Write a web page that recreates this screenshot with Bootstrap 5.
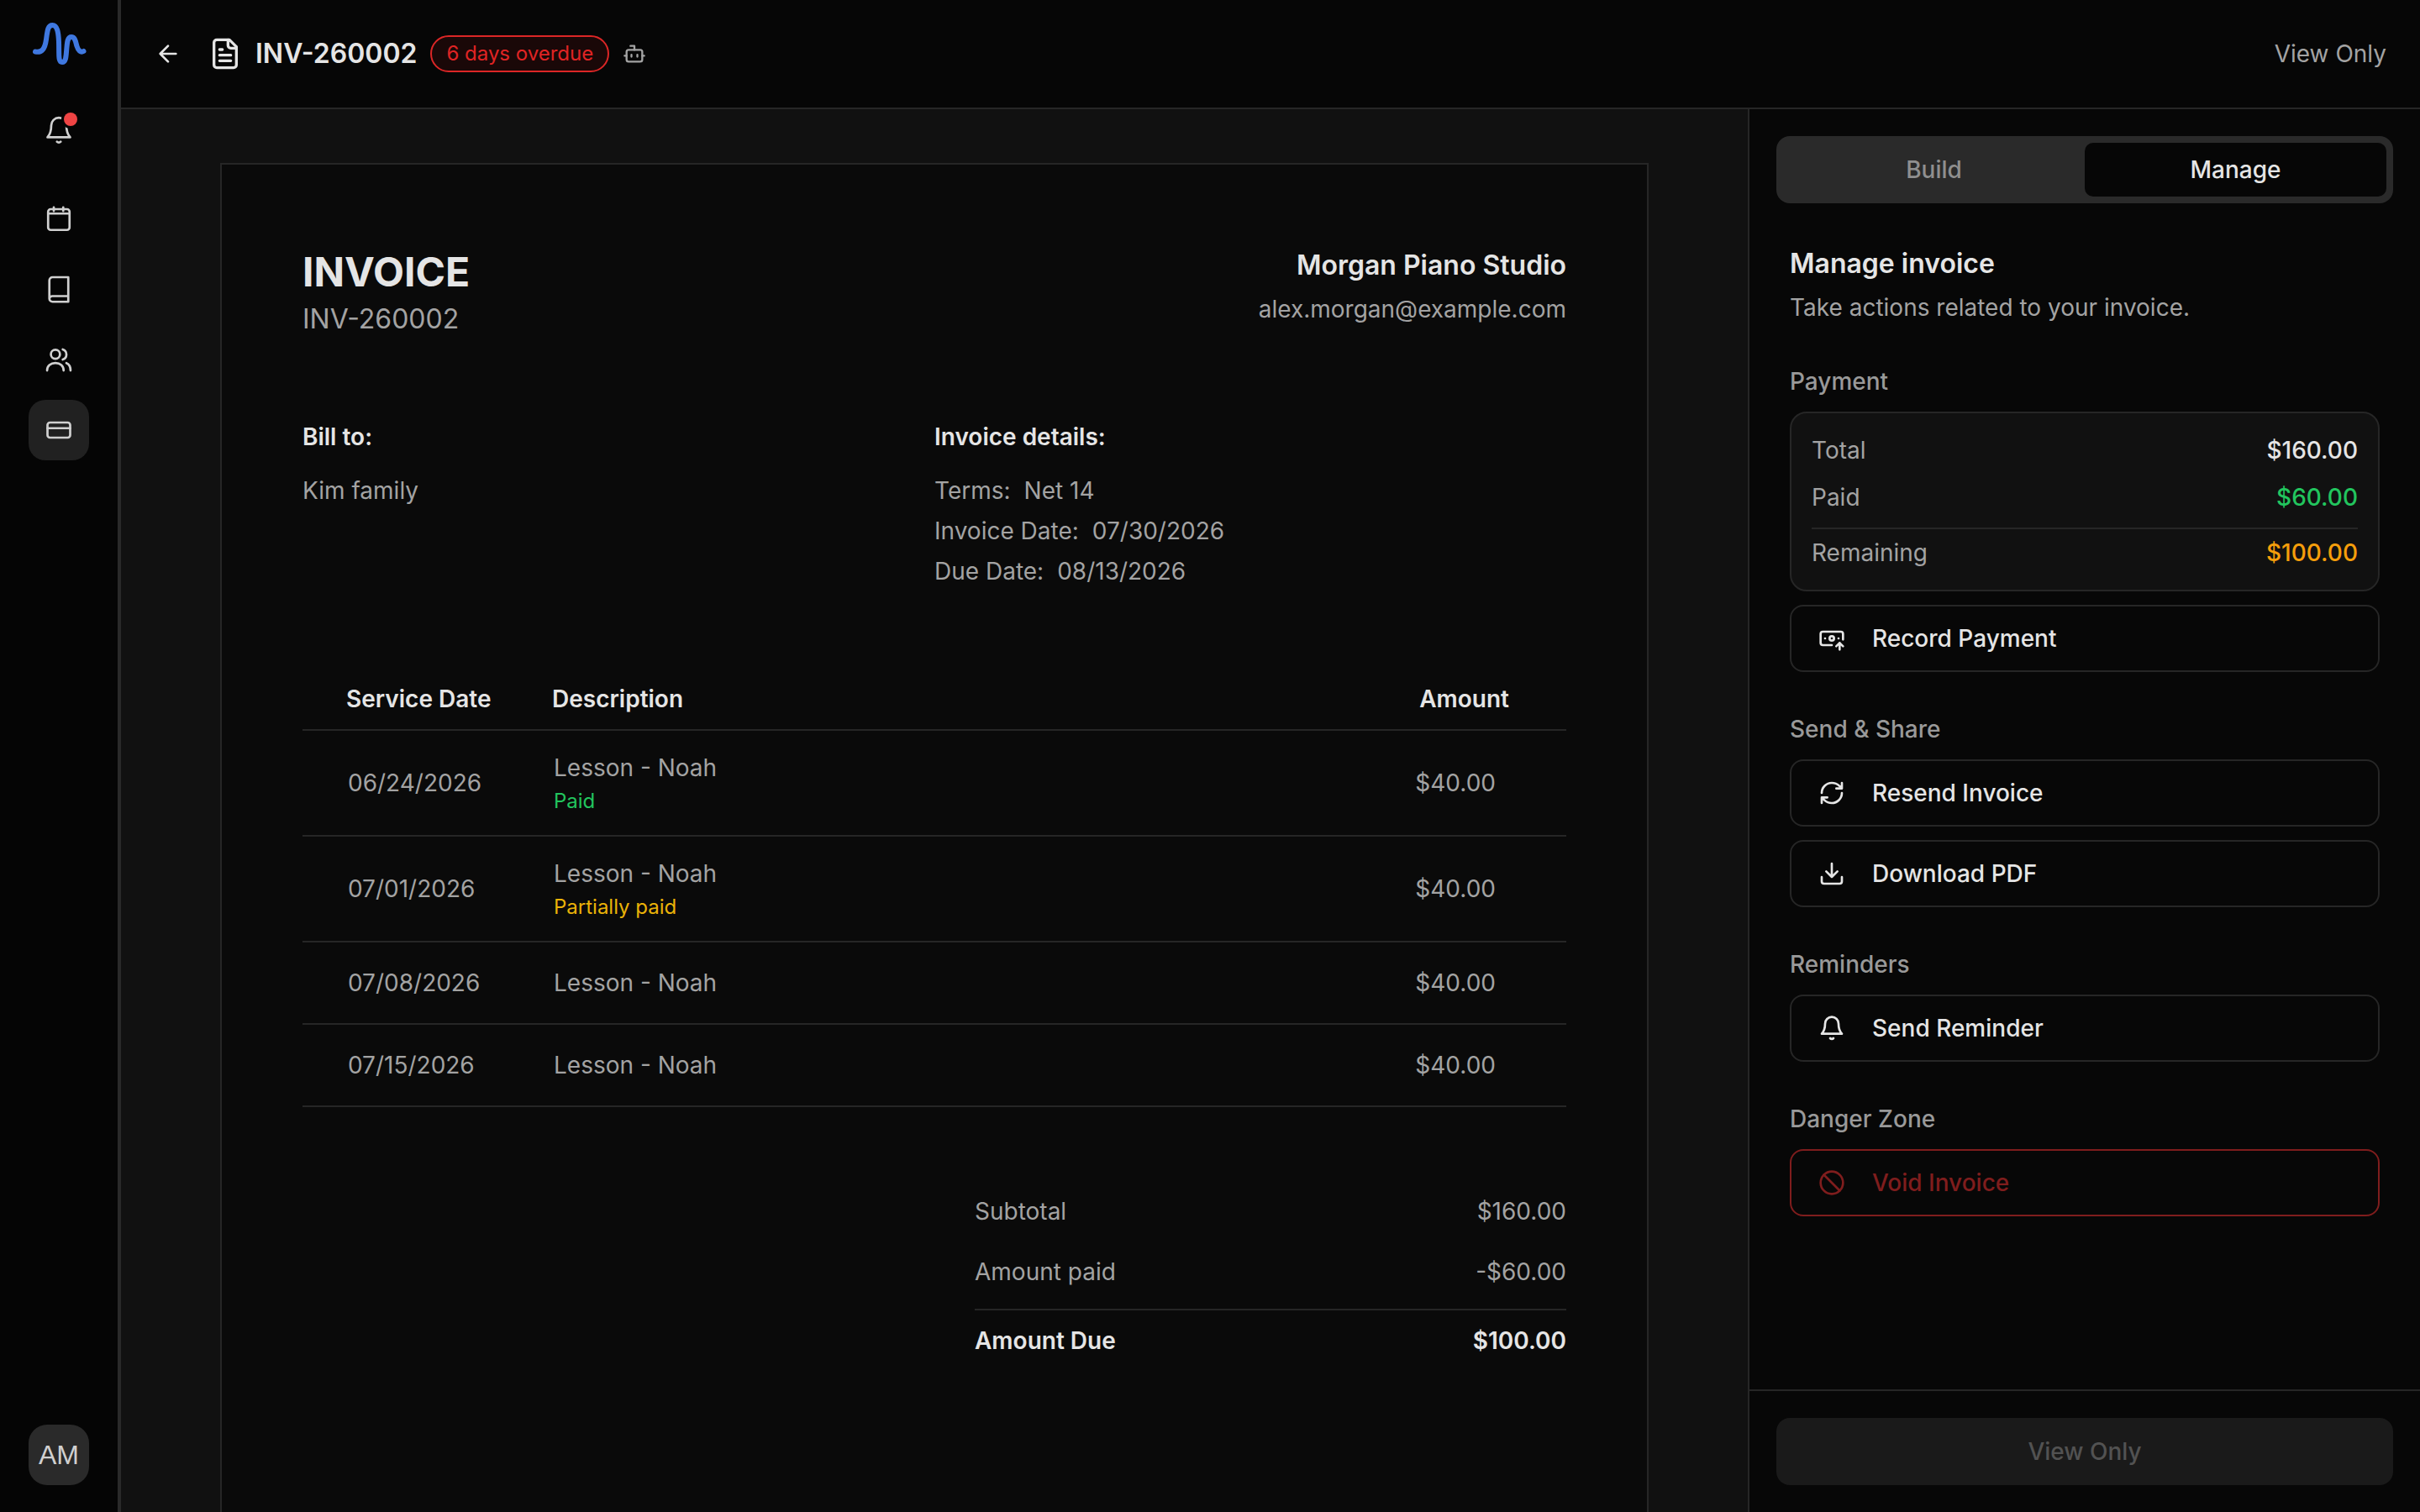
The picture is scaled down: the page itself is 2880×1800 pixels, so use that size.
<!DOCTYPE html>
<html lang="en">
<head>
  <meta charset="UTF-8" />
  <meta name="viewport" content="width=device-width, initial-scale=1.0" />
  <title>INV-260002</title>
  <link href="https://cdn.jsdelivr.net/npm/bootstrap@5.3.3/dist/css/bootstrap.min.css" rel="stylesheet">
  <style>
    html { font-size: 32px; }
    body { font-family: Inter, "Liberation Sans", sans-serif; font-size: 28px; line-height: 40px; background: #111; color: #a3a3a3; }
    svg { fill: none; stroke: currentColor; stroke-width: 2; stroke-linecap: round; stroke-linejoin: round; flex-shrink: 0; display: block; }
    .ico-light { color: #e5e5e5; }

    .sidebar { width: 144px; flex-shrink: 0; background: #050505; border-right: 4px solid #2a2a2a; color: #d0d0d0; padding-top: 24px; }
    .sidebar svg { stroke-width: 1.8; }
    .sidebar svg.logo { color: #3f78e0; stroke-width: 6; }
    .side-btn { position: relative; width: 72px; height: 72px; border-radius: 20px; }
    .side-btn.active { background: #212121; }
    .side-btn.bell { margin-top: 38px; margin-bottom: 35px; }
    .side-stack { gap: 11.67px; }
    .notif-dot { position: absolute; left: 42px; top: 16px; width: 16px; height: 16px; border-radius: 50%; background: #ef4444; box-shadow: 0 0 0 3px #050505; }
    .avatar { width: 72px; height: 72px; border-radius: 22px; background: #2a2a2a; font-family: "Liberation Sans", sans-serif; font-size: 32px; margin-bottom: 32px; }

    .topbar { height: 130px; flex-shrink: 0; background: #060606; border-bottom: 2px solid #262626; padding: 0 40px; }
    .topbar h1 { font-size: 32px; font-weight: 600; color: #e5e5e5; margin: 0 0 0 16px; line-height: 48px; }
    .overdue { font-size: 24px; line-height: 32px; font-weight: 400; color: #e02424; background: #1a0808; border: 2px solid #dc2626; border-radius: 999px; padding: 4px 17px; margin: 0 16px; }

    .doc-wrap { padding-top: 64px; min-width: 0; }
    .doc { width: 1700px; min-height: 2000px; background: #0a0a0a; border: 2px solid #262626; padding: 96px; }
    .doc-title { font-size: 48px; line-height: 64px; font-weight: 700; color: #e5e5e5; }
    .doc-num { font-size: 32px; line-height: 48px; }
    .studio { font-size: 32px; line-height: 48px; font-weight: 600; color: #e5e5e5; }
    .strong-label { font-weight: 600; color: #e5e5e5; }
    .details { margin-top: 96px; margin-bottom: 108px; }
    .sub-first { margin-top: 20px; }
    .meta { line-height: 48px; }
    .meta span { margin-right: 16px; }

    .inv-table { --bs-table-bg: transparent; --bs-table-color: #a3a3a3; --bs-table-border-color: #262626; border-color: #262626; table-layout: fixed; margin: 0; }
    .inv-table > :not(caption) > * > * { border-bottom-width: 2px; vertical-align: middle; padding: 24px 0; }
    .inv-table th { font-weight: 600; color: #e5e5e5; padding: 0 0 16px 0; }
    .inv-table .col-date { width: 297px; }
    .inv-table .col-amt { width: 400px; }
    .inv-table th.c-date { padding-left: 52px; }
    .inv-table td.c-date { padding-left: 54px; }
    .inv-table td.c-desc { padding-left: 2px; }
    .inv-table th.c-amt { padding-right: 68px; }
    .inv-table td.c-amt { padding-right: 84px; }
    .inv-table .single { height: 98px; padding-top: 0; padding-bottom: 0; }
    .row-status { font-size: 24px; line-height: 32px; margin-top: 4px; }
    .c-white { color: #e5e5e5; }
    .c-green { color: #22c55e; }
    .c-yellow { color: #eab308; }
    .c-orange { color: #f59e0b; }

    .totals { width: 704px; margin-top: 104px; }
    .totals-gap { margin-top: 32px; }
    .totals .rule { border-top: 2px solid #262626; margin-top: 24px; padding-top: 16px; }

    .panel { width: 800px; flex-shrink: 0; background: #070707; border-left: 2px solid #262626; }
    .panel-top { padding: 32px 32px 0; }
    .tabs { background: #2a2a2a; border-radius: 16px; padding: 8px; height: 80px; }
    .tabs .nav-link { height: 64px; padding: 0; font-size: 28px; line-height: 64px; font-weight: 500; color: #8f8f8f; border-radius: 10px; }
    .tabs .nav-link.active { background: #060606; color: #e5e5e5; }
    .panel-body { padding: 0 16px; }
    .panel-title { font-size: 32px; line-height: 48px; font-weight: 600; color: #e5e5e5; margin-top: 48px; }
    .panel-sub { margin-top: 8px; }
    .section-label { margin-top: 48px; margin-bottom: 16px; font-weight: 500; color: #999; }
    .pay-card { background: #111; border: 2px solid #262626; border-radius: 20px; padding: 24px; margin-bottom: 16px; }
    .pay-card .val { font-weight: 500; }
    .pay-rule { border-top: 2px solid #262626; margin: 16px 0 8px; }
    .act-btn { height: 80px; width: 100%; gap: 32px; padding: 0 32px; font-size: 28px; font-weight: 500; color: #e5e5e5; background: transparent; border: 2px solid #262626; border-radius: 16px; }
    .act-btn.void { color: #7f1d1d; border-color: #7f1d1d; }
    .panel-foot { border-top: 2px solid #262626; padding: 32px; }
    .foot-btn, .foot-btn:disabled { height: 80px; font-size: 28px; font-weight: 500; background: #1a1a1a; color: #525252; border: 0; border-radius: 16px; opacity: 1; }
  </style>
</head>
<body class="d-flex vh-100 overflow-hidden">

  <aside class="sidebar d-flex flex-column align-items-center">
    <svg class="logo" width="70" height="56" viewBox="35 24 70 56"><path d="M42 61.5C50 63 53.5 58 55 47 56.5 36 57 30 62.500 30 68 30 69.5 38 70 50 70.5 65 69 74 74 74 79 74 78.5 66 79.5 56 80 50 80.5 44 85 44 89.5 44 90 50 91.5 55 93 60 96 63 99.5 61"/></svg>
    <a class="side-btn bell d-flex align-items-center justify-content-center text-reset">
      <svg width="36" height="36" viewBox="0 0 24 24"><path d="M6 8.800a6 6 0 0 1 12 0c0 4.500 1.200 7.500 3 9.500H3c1.800-2 3-5 3-9.500z"/><path d="M10.500 21.800a2 2 0 0 0 3 0"/></svg>
      <span class="notif-dot"></span>
    </a>
    <div class="d-flex flex-column side-stack">
      <a class="side-btn d-flex align-items-center justify-content-center text-reset">
        <svg width="36" height="36" viewBox="0 0 24 24"><rect x="3.5" y="4" width="17" height="16.5" rx="2"/><path d="M3.5 7.5h17M8 2.5v3M15.5 2.5v3"/></svg>
      </a>
      <a class="side-btn d-flex align-items-center justify-content-center text-reset">
        <svg width="36" height="36" viewBox="0 0 24 24"><path d="M4.5 19V4.5A2.5 2.5 0 0 1 7 2h12.5v19.5H7A2.5 2.5 0 0 1 4.5 19a2.5 2.5 0 0 1 2.5-2h12.5"/></svg>
      </a>
      <a class="side-btn d-flex align-items-center justify-content-center text-reset">
        <svg width="36" height="36" viewBox="0 0 24 24"><circle cx="9.3" cy="7.8" r="3.6"/><path d="M2.7 20.7c0-3.5 2.8-6 6.6-6s6.5 2.5 6.5 6M15.1 4a4.2 4.2 0 0 1 0 8M18 14.8c2 .8 3.3 3 3.3 5.9"/></svg>
      </a>
      <a class="side-btn active d-flex align-items-center justify-content-center text-reset">
        <svg width="36" height="36" viewBox="0 0 24 24"><rect x="3" y="6" width="18" height="12" rx="2"/><path d="M3 10.5h18"/></svg>
      </a>
    </div>
    <div class="avatar mt-auto d-flex align-items-center justify-content-center">AM</div>
  </aside>

  <div class="flex-grow-1 d-flex flex-column overflow-hidden">
    <header class="topbar d-flex align-items-center">
      <svg class="me-3 ico-light" width="32" height="32" viewBox="0 0 24 24"><path d="m12 19-7-7 7-7M19 12H5"/></svg>
      <svg class="ico-light" width="40" height="40" viewBox="0 0 24 24"><path d="M15 2H6a2 2 0 0 0-2 2v16a2 2 0 0 0 2 2h12a2 2 0 0 0 2-2V7Z"/><path d="M14 2v4a2 2 0 0 0 2 2h4M10 9H8M16 13H8M16 17H8"/></svg>
      <h1>INV-260002</h1>
      <span class="overdue">6 days overdue</span>
      <svg width="28" height="28" viewBox="0 0 24 24"><path d="M12 8V4H8M2 14h2M20 14h2M15 13v2M9 13v2"/><rect x="4" y="8" width="16" height="12" rx="2"/></svg>
      <span class="ms-auto">View Only</span>
    </header>

    <div class="d-flex flex-grow-1 overflow-hidden">
      <main class="doc-wrap flex-grow-1 d-flex justify-content-center">
        <article class="doc flex-shrink-0">
          <div class="d-flex justify-content-between">
            <div>
              <div class="doc-title">INVOICE</div>
              <div class="doc-num">INV-260002</div>
            </div>
            <div class="text-end">
              <div class="studio">Morgan Piano Studio</div>
              <div class="mt-1">alex.morgan@example.com</div>
            </div>
          </div>

          <div class="row g-0 details">
            <div class="col-6">
              <div class="strong-label">Bill to:</div>
              <div class="meta sub-first">Kim family</div>
            </div>
            <div class="col-6">
              <div class="strong-label">Invoice details:</div>
              <div class="meta sub-first"><span>Terms:</span>Net 14</div>
              <div class="meta"><span>Invoice Date:</span>07/30/2026</div>
              <div class="meta"><span>Due Date:</span>08/13/2026</div>
            </div>
          </div>

          <table class="table inv-table">
            <colgroup><col class="col-date"><col><col class="col-amt"></colgroup>
            <thead>
              <tr><th class="c-date">Service Date</th><th>Description</th><th class="c-amt text-end">Amount</th></tr>
            </thead>
            <tbody>
              <tr>
                <td class="c-date">06/24/2026</td>
                <td class="c-desc">Lesson - Noah<div class="row-status c-green">Paid</div></td>
                <td class="c-amt text-end">$40.00</td>
              </tr>
              <tr>
                <td class="c-date">07/01/2026</td>
                <td class="c-desc">Lesson - Noah<div class="row-status c-yellow">Partially paid</div></td>
                <td class="c-amt text-end">$40.00</td>
              </tr>
              <tr>
                <td class="c-date single">07/08/2026</td>
                <td class="c-desc single">Lesson - Noah</td>
                <td class="c-amt single text-end">$40.00</td>
              </tr>
              <tr>
                <td class="c-date single">07/15/2026</td>
                <td class="c-desc single">Lesson - Noah</td>
                <td class="c-amt single text-end">$40.00</td>
              </tr>
            </tbody>
          </table>

          <div class="d-flex justify-content-end">
            <div class="totals">
              <div class="d-flex justify-content-between"><span>Subtotal</span><span>$160.00</span></div>
              <div class="d-flex justify-content-between totals-gap"><span>Amount paid</span><span>-$60.00</span></div>
              <div class="d-flex justify-content-between rule strong-label"><span>Amount Due</span><span>$100.00</span></div>
            </div>
          </div>
        </article>
      </main>

      <aside class="panel d-flex flex-column">
        <div class="panel-top">
          <ul class="nav nav-justified tabs">
            <li class="nav-item"><a class="nav-link" href="#">Build</a></li>
            <li class="nav-item"><a class="nav-link active" href="#">Manage</a></li>
          </ul>
          <div class="panel-body">
            <div class="panel-title">Manage invoice</div>
            <div class="panel-sub">Take actions related to your invoice.</div>

            <div class="section-label">Payment</div>
            <div class="pay-card">
              <div class="d-flex justify-content-between mb-2"><span>Total</span><span class="val c-white">$160.00</span></div>
              <div class="d-flex justify-content-between"><span>Paid</span><span class="val c-green">$60.00</span></div>
              <div class="pay-rule"></div>
              <div class="d-flex justify-content-between"><span>Remaining</span><span class="val c-orange">$100.00</span></div>
            </div>
            <button class="btn act-btn d-flex align-items-center">
              <svg width="32" height="32" viewBox="0 0 24 24"><path d="M12 18H4a2 2 0 0 1-2-2V8a2 2 0 0 1 2-2h16a2 2 0 0 1 2 2v5M18 12h.01M19 22v-6M22 19l-3-3-3 3M6 12h.01"/><circle cx="12" cy="12" r="2"/></svg>
              Record Payment
            </button>

            <div class="section-label">Send &amp; Share</div>
            <div class="d-flex flex-column gap-2">
              <button class="btn act-btn d-flex align-items-center">
                <svg width="32" height="32" viewBox="0 0 24 24"><path d="M3 12a9 9 0 0 1 9-9 9.75 9.75 0 0 1 6.74 2.74L21 8M21 3v5h-5M21 12a9 9 0 0 1-9 9 9.75 9.75 0 0 1-6.74-2.74L3 16M8 16H3v5"/></svg>
                Resend Invoice
              </button>
              <button class="btn act-btn d-flex align-items-center">
                <svg width="32" height="32" viewBox="0 0 24 24"><path d="M12 15V3M21 15v4a2 2 0 0 1-2 2H5a2 2 0 0 1-2-2v-4M7 10l5 5 5-5"/></svg>
                Download PDF
              </button>
            </div>

            <div class="section-label">Reminders</div>
            <button class="btn act-btn d-flex align-items-center">
              <svg width="32" height="32" viewBox="0 0 24 24"><path d="M6 8a6 6 0 0 1 12 0c0 4.5 1.2 7 3 9H3c1.8-2 3-4.5 3-9z"/><path d="M10.5 21a2 2 0 0 0 3 0"/></svg>
              Send Reminder
            </button>

            <div class="section-label">Danger Zone</div>
            <button class="btn act-btn void d-flex align-items-center">
              <svg width="32" height="32" viewBox="0 0 24 24"><circle cx="12" cy="12" r="10"/><path d="m4.9 4.9 14.2 14.2"/></svg>
              Void Invoice
            </button>
          </div>
        </div>
        <div class="panel-foot mt-auto">
          <button class="btn foot-btn w-100" disabled>View Only</button>
        </div>
      </aside>
    </div>
  </div>

  <script src="https://cdn.jsdelivr.net/npm/bootstrap@5.3.3/dist/js/bootstrap.bundle.min.js"></script>
</body>
</html>
